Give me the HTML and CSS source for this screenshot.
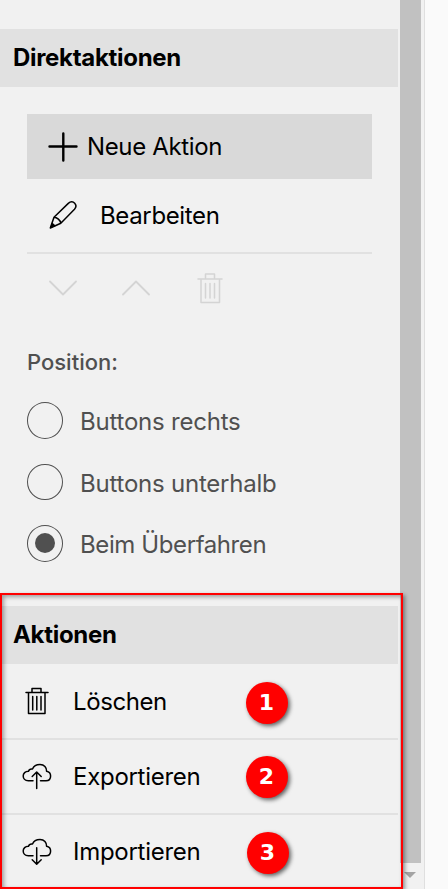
FILE: index.html
```html
<!DOCTYPE html>
<html lang="de">
<head>
<meta charset="utf-8">
<title>Direktaktionen</title>
<link rel="stylesheet" href="styles.css">
</head>
<body>
<div class="app">
  <main class="panel">
    <h2 class="heading heading-first"><span>Direktaktionen</span></h2>
    <section class="direct">
      <div class="new-action">
        <svg width="30" height="30" viewBox="0 0 30 30"><path d="M15.3 1.5V28.5M1.5 14.5H28.5" stroke-width="2.4"/></svg>
        <span>Neue Aktion</span>
      </div>
      <div class="edit">
        <svg width="30" height="30" viewBox="0 0 30 30"><path d="M2.3 27 6 16.3 20.3 2.4C23 0 25.5 1 26.7 2.3C28.3 4 28.3 6.3 26.5 8.3L12.8 22.2ZM6 16.3C9 16.4 12.4 19.2 12.8 22.2" stroke-width="1.5"/><path class="solid" d="M2 27.3 3.8 21.8C5.3 22.3 7 23.7 7.4 25.3Z"/></svg>
        <span>Bearbeiten</span>
      </div>
      <div class="tools">
        <svg width="28" height="16" viewBox="0 0 28 16"><path d="M1 1.5 14 14.5 27 1.5" stroke-width="1.8"/></svg>
        <svg class="up" width="28" height="16" viewBox="0 0 28 16"><path d="M1 14.5 14 1.5 27 14.5" stroke-width="1.8"/></svg>
        <svg class="bin" width="26" height="32" viewBox="0 0 26 32"><path d="M1 7H25M8.5 7V2H17.5V7M4 7V30.5H22.5V7M8.5 11.5V26M13 11.5V26M17.5 11.5V26" stroke-width="1.5"/></svg>
      </div>
      <div class="position-label"><span>Position:</span></div>
      <div class="options">
        <label class="option"><i class="radio"></i><span>Buttons rechts</span></label>
        <label class="option"><i class="radio"></i><span>Buttons unterhalb</span></label>
        <label class="option"><i class="radio checked"></i><span class="tight">Beim Überfahren</span></label>
      </div>
    </section>
    <h2 class="heading"><span>Aktionen</span></h2>
    <div class="row row-delete">
      <svg width="30" height="30" viewBox="0 0 30 30"><path d="M4 5.5H26M10 5.5V1.5H19V5.5M6.5 5.5V26.5H23V5.5M10.7 9.5V23M14.8 9.5V23M19 9.5V23" stroke-width="1.5"/></svg>
      <span>Löschen</span><b class="badge">1</b>
    </div>
    <div class="row">
      <svg width="30" height="30" viewBox="0 0 30 30"><path d="M11 18.8H6.2C3 18.8 1.2 16.5 1.2 14C1.2 11.3 3.3 9.2 6.5 9.3C7 7.7 8.5 6.8 10.5 7.1C11.7 4 14.5 2.5 18 2.5C22.2 2.5 24.8 5.3 24.6 9.3C27 9.8 28.6 11.5 28.6 14C28.6 16.8 26.8 18.8 24 18.8H18.5M14.7 26.5V10.3M10.2 14.5 14.7 10 19.2 14.5" stroke-width="1.5"/></svg>
      <span>Exportieren</span><b class="badge">2</b>
    </div>
    <div class="row row-last">
      <svg width="30" height="30" viewBox="0 0 30 30"><path d="M11 18.8H6.2C3 18.8 1.2 16.5 1.2 14C1.2 11.3 3.3 9.2 6.5 9.3C7 7.7 8.5 6.8 10.5 7.1C11.7 4 14.5 2.5 18 2.5C22.2 2.5 24.8 5.3 24.6 9.3C27 9.8 28.6 11.5 28.6 14C28.6 16.8 26.8 18.8 24 18.8H18.5M14.7 10.7V27M10.2 22.8 14.7 27.3 19.2 22.8" stroke-width="1.5"/></svg>
      <span>Importieren</span><b class="badge badge-three">3</b>
    </div>
  </main>
  <div class="scrollbar"><div class="thumb"></div><div class="arrow"></div></div>
  <div class="canvas"></div>
  <div class="frame"></div>
</div>
</body>
</html>
```

FILE: styles.css
```css
* { box-sizing: border-box; }
body {
  margin: 0;
  overflow: hidden;
  background: #f1f1f1;
  color: #000;
  font: 24px/30px Inter, "Liberation Sans", sans-serif;
  letter-spacing: -.36px;
}
.app { position: relative; display: flex; height: 889px; overflow: hidden; }
.panel { width: 400px; padding-right: 2px; }
span { white-space: nowrap; }
svg { flex: none; fill: none; stroke: currentColor; stroke-linecap: round; stroke-linejoin: round; }
.solid { fill: currentColor; stroke: none; }

.heading {
  display: flex;
  align-items: center;
  height: 58px;
  margin: 0;
  padding-left: 13px;
  background: #e1e1e1;
  font-size: 24px;
  font-weight: 700;
  letter-spacing: -.3px;
}
.heading-first { margin-top: 29px; }

.direct { height: 519px; padding: 27px 26px 0 27px; }
.new-action {
  display: flex;
  align-items: center;
  gap: 9px;
  height: 65px;
  padding-left: 21px;
  background: #d9d9d9;
}
.edit {
  display: flex;
  align-items: center;
  gap: 22px;
  height: 75px;
  padding-left: 21px;
  border-bottom: 2px solid #e1e1e1;
}
.tools { display: flex; align-items: center; height: 71px; padding: 0 0 3px 22px; color: #d4d4d4; }
.up { margin-left: 45px; }
.bin { margin-left: 47px; }
.position-label { height: 77px; padding-top: 22px; color: #505050; font-size: 22px; font-weight: 500; letter-spacing: 0; }
.options { display: grid; gap: 25px; color: #505050; letter-spacing: -.22px; }
.option { display: flex; align-items: center; gap: 17px; height: 36.5px; }
.option span { padding-top: 3.5px; }
.tight { letter-spacing: -.4px; }
.radio {
  display: grid;
  place-items: center;
  width: 36px;
  height: 36.5px;
  border: 1px solid #505050;
  border-radius: 50%;
}
.checked::after { content: ""; width: 20px; height: 20px; border-radius: 50%; background: #505050; }

.row {
  position: relative;
  display: flex;
  align-items: center;
  gap: 21px;
  height: 75px;
  padding-left: 22px;
  border-bottom: 2px solid #e1e1e1;
  letter-spacing: -.28px;
}
.row-delete { height: 76px; padding-top: 2px; letter-spacing: -.4px; }
.row-last { padding-bottom: 2px; border-bottom: 0; }
.badge {
  position: absolute;
  left: 245.5px;
  top: 15.5px;
  width: 42px;
  height: 42px;
  border-radius: 50%;
  background: #f00;
  box-shadow: 2px 2px 4px rgba(0, 0, 0, .6);
  color: #fff;
  font: bold 22px/42px "DejaVu Sans", sans-serif;
  letter-spacing: 0;
  text-align: center;
}
.row-delete .badge { top: 17.5px; }
.badge-three { left: 246.5px; top: 16.5px; }

.scrollbar { width: 24px; }
.thumb { width: 21px; height: 863px; background: #c1c1c1; }
.arrow {
  width: 12px;
  height: 6px;
  margin: 9px 0 0 4px;
  background: #a3a3a3;
  clip-path: polygon(0 0, 100% 0, 50% 100%);
}
.canvas { flex: 1; border-left: 1px solid #dfdfdf; background: #fafafa; }
.frame {
  position: absolute;
  left: 0;
  top: 593px;
  width: 403px;
  height: 296px;
  border: 2px solid #f00;
  box-shadow: 2px 2px 4px rgba(0, 0, 0, .4), inset 2px 2px 4px rgba(0, 0, 0, .35);
}
```
